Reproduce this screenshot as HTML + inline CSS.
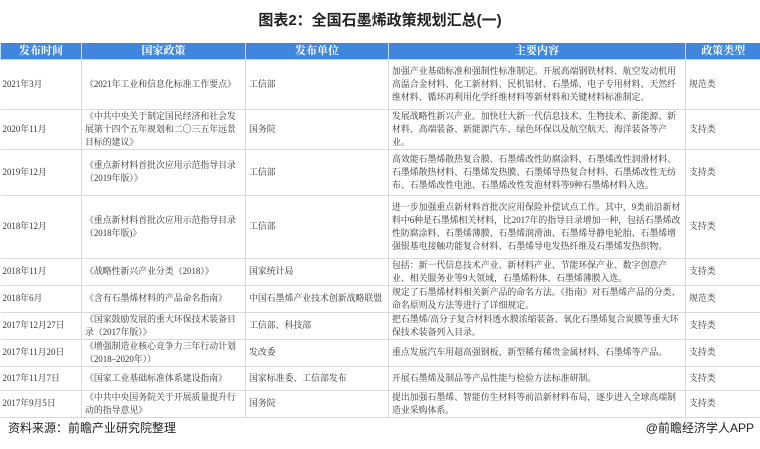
<!DOCTYPE html>
<html><head><meta charset="utf-8"><style>
*{margin:0;padding:0;box-sizing:border-box}
body{width:760px;height:449px;background:#fff;position:relative;overflow:hidden;font-family:"Liberation Serif","Noto Serif CJK SC",serif;color:#333}
h1{position:absolute;top:9px;left:0;width:760px;text-align:center;font:bold 15px "Liberation Sans","Noto Sans CJK SC",sans-serif;color:#222}
table{position:absolute;top:43px;left:0;width:760px;border-collapse:collapse;table-layout:fixed;font-size:8.9px;line-height:13px}
th{background:#3f86dc;color:#fff;font-weight:bold;font-size:11px;height:16px;line-height:14px;border-left:1px solid #cfe0f5;padding:0}
td{border:1px solid #d8d8d8;border-top:1.5px solid #d0d0d0;padding:0 1px 0 3px;vertical-align:middle;overflow:hidden}
td:first-child{border-left:none;padding-left:2px;white-space:nowrap}
td:last-child{border-right:none}
.f{position:absolute;top:419px;font:12px "Liberation Sans","Noto Sans CJK SC",sans-serif;color:#222}
</style></head><body>
<h1>图表2：全国石墨烯政策规划汇总(一)</h1>
<table>
<colgroup><col style="width:81px"><col style="width:164px"><col style="width:143px"><col style="width:297px"><col style="width:75px"></colgroup>
<tr><th>发布时间</th><th>国家政策</th><th>发布单位</th><th>主要内容</th><th>政策类型</th></tr>
<tr style="height:50px"><td>2021年3月</td><td>《2021年工业和信息化标准工作要点》</td><td>工信部</td><td>加强产业基础标准和强制性标准制定。开展高端钢铁材料、航空发动机用高温合金材料、化工新材料、民机铝材、石墨烯、电子专用材料、天然纤维材料、循环再利用化学纤维材料等新材料和关键材料标准制定。</td><td>规范类</td></tr>
<tr style="height:39px"><td>2020年11月</td><td>《中共中央关于制定国民经济和社会发展第十四个五年规划和二〇三五年远景目标的建议》</td><td>国务院</td><td>发展战略性新兴产业。加快壮大新一代信息技术、生物技术、新能源、新材料、高端装备、新能源汽车、绿色环保以及航空航天、海洋装备等产业。</td><td>支持类</td></tr>
<tr style="height:46px"><td>2019年12月</td><td>《重点新材料首批次应用示范指导目录（2019年版）》</td><td>工信部</td><td>高效能石墨烯散热复合膜、石墨烯改性防腐涂料、石墨烯改性润滑材料、石墨烯散热材料、石墨烯发热膜、石墨烯导热复合材料、石墨烯改性无纺布、石墨烯改性电池、石墨烯改性发泡材料等9种石墨烯材料入选。</td><td>支持类</td></tr>
<tr style="height:63px"><td>2018年12月</td><td>《重点新材料首批次应用示范指导目录（2018年版)》</td><td>工信部</td><td>进一步加强重点新材料首批次应用保险补偿试点工作。其中，9类前沿新材料中6种是石墨烯相关材料，比2017年的指导目录增加一种，包括石墨烯改性防腐涂料、石墨烯薄膜、石墨烯润滑油、石墨烯导静电轮胎、石墨烯增强银基电接触功能复合材料、石墨烯导电发热纤维及石墨烯发热织物。</td><td>支持类</td></tr>
<tr style="height:26px"><td>2018年11月</td><td>《战略性新兴产业分类（2018）》</td><td>国家统计局</td><td>包括：新一代信息技术产业、新材料产业、节能环保产业、数字创意产业、相关服务业等9大领域，石墨烯粉体、石墨烯薄膜入选。</td><td>支持类</td></tr>
<tr style="height:25px"><td>2018年6月</td><td>《含有石墨烯材料的产品命名指南》</td><td style="white-space:nowrap">中国石墨烯产业技术创新战略联盟</td><td>规定了石墨烯材料相关新产品的命名方法。《指南》对石墨烯产品的分类、命名原则及方法等进行了详细规定。</td><td>规范类</td></tr>
<tr style="height:26px"><td>2017年12月27日</td><td>《国家鼓励发展的重大环保技术装备目录（2017年版）》</td><td>工信部、科技部</td><td>把石墨烯/高分子复合材料透水膜浓缩装备、氧化石墨烯复合炭膜等重大环保技术装备列入目录。</td><td>支持类</td></tr>
<tr style="height:25px"><td>2017年11月20日</td><td>《增强制造业核心竞争力三年行动计划（2018–2020年））</td><td>发改委</td><td>重点发展汽车用超高强钢板、新型稀有稀贵金属材料、石墨烯等产品。</td><td>支持类</td></tr>
<tr style="height:24px"><td>2017年11月7日</td><td>《国家工业基础标准体系建设指南》</td><td>国家标准委、工信部发布</td><td>开展石墨烯及制品等产品性能与检验方法标准研制。</td><td>支持类</td></tr>
<tr style="height:27px"><td>2017年9月5日</td><td>《中共中央国务院关于开展质量提升行动的指导意见》</td><td>国务院</td><td>提出加强石墨烯、智能仿生材料等前沿新材料布局，逐步进入全球高端制造业采购体系。</td><td>支持类</td></tr>
</table>
<div class="f" style="left:8px">资料来源：前瞻产业研究院整理</div>
<div class="f" style="right:6px">@前瞻经济学人APP</div>
</body></html>
